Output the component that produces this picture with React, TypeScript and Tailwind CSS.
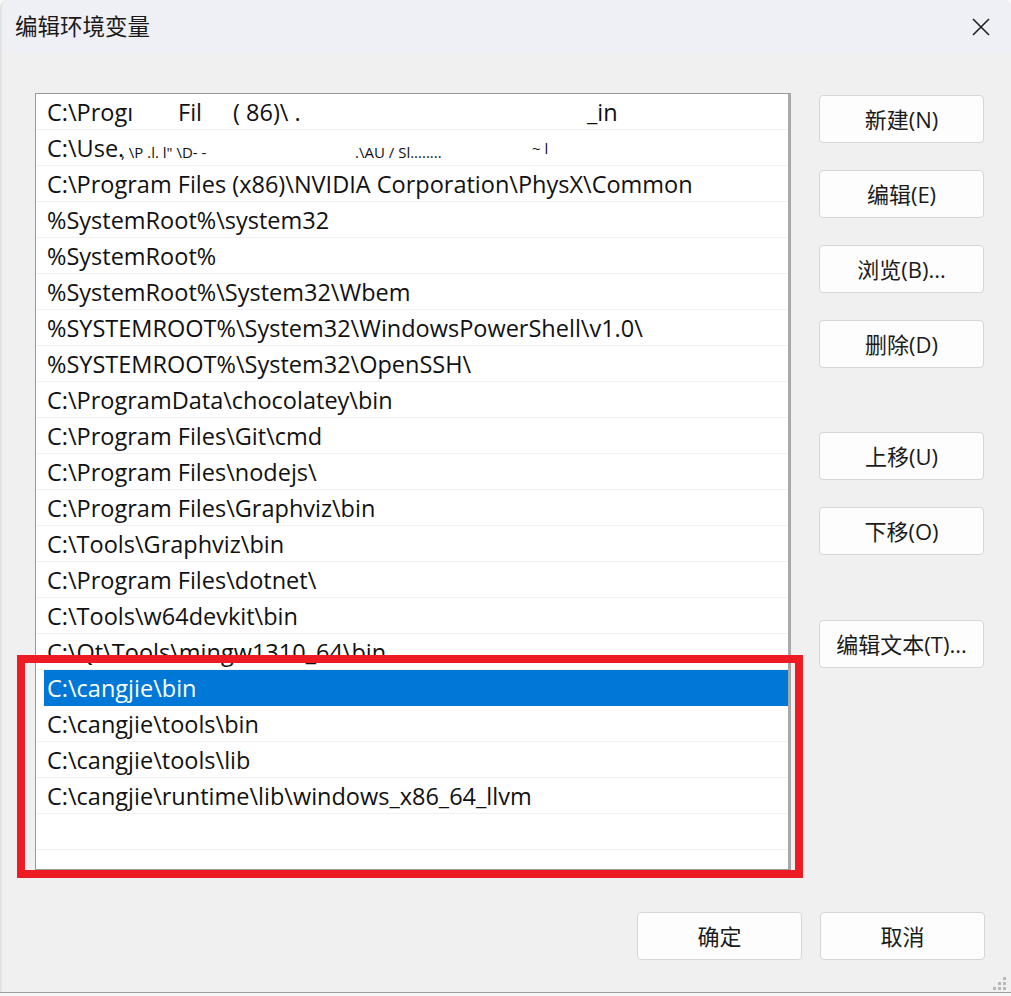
import React from 'react';

const paths: string[] = [
  'C:\\Program Files (x86)\\NVIDIA Corporation\\PhysX\\Common',
  '%SystemRoot%\\system32',
  '%SystemRoot%',
  '%SystemRoot%\\System32\\Wbem',
  '%SYSTEMROOT%\\System32\\WindowsPowerShell\\v1.0\\',
  '%SYSTEMROOT%\\System32\\OpenSSH\\',
  'C:\\ProgramData\\chocolatey\\bin',
  'C:\\Program Files\\Git\\cmd',
  'C:\\Program Files\\nodejs\\',
  'C:\\Program Files\\Graphviz\\bin',
  'C:\\Tools\\Graphviz\\bin',
  'C:\\Program Files\\dotnet\\',
  'C:\\Tools\\w64devkit\\bin',
  'C:\\Qt\\Tools\\mingw1310_64\\bin',
];

const cangjie: string[] = [
  'C:\\cangjie\\bin',
  'C:\\cangjie\\tools\\bin',
  'C:\\cangjie\\tools\\lib',
  'C:\\cangjie\\runtime\\lib\\windows_x86_64_llvm',
];

const Btn = ({ label, className = '' }: { label: string; className?: string }) => (
  <button
    className={`w-[165px] h-[48px] bg-[#fdfdfd] border border-[#d6d6d6] rounded-[4px] text-[22px] text-[#1b1b1b] flex items-center justify-center ${className}`}
  >
    {label}
  </button>
);

const Row = ({ children, selected = false }: { children: React.ReactNode; selected?: boolean }) =>
  selected ? (
    <div className="h-[36px] flex items-center pl-[8px]">
      <div className="h-full flex-1 bg-[#0078d7] text-white flex items-center pl-[3px] pt-[2px]">{children}</div>
    </div>
  ) : (
    <div className="h-[36px] flex items-center pl-[11px] pt-[2px] border-b border-[#f0f0f0] whitespace-nowrap">
      {children}
    </div>
  );

export default function App() {
  return (
    <div
      className="w-[1011px] h-[996px] bg-[#f7f7f7] relative overflow-hidden"
      style={{ fontFamily: '"Open Sans", "Noto Sans CJK SC", sans-serif' }}
    >
      <div className="h-[992px] bg-[#f0f0f0] rounded-t-[8px] border-l-[2px] border-[#e2e2e2] flex flex-col">
        {/* title bar */}
        <div className="h-[53px] bg-[#eef0f6] rounded-t-[8px] flex items-center justify-between pl-[13px] pr-[20px]">
          <span className="text-[22.5px] text-[#1a1a1a]">编辑环境变量</span>
          <svg width="20" height="20" viewBox="0 0 20 20" className="mt-[1px]">
            <path d="M2 2 L18 18 M18 2 L2 18" stroke="#1f1f1f" strokeWidth="1.6" />
          </svg>
        </div>

        {/* body */}
        <div className="flex pl-[33px] pt-[40px]">
          <div className="w-[756px] h-[777px] bg-white border border-[#9a9a9a] border-r-[3px] border-r-[#a8a8a8] text-[23.5px] text-[#111] overflow-hidden">
            {/* first two entries are partly blotted out in the capture */}
            <Row>
              <span className="w-[131px] shrink-0">C:\Progı</span>
              <span className="w-[55px] shrink-0">Fil</span>
              <span className="w-[354px] shrink-0">( 86)\ .</span>
              <span>_in</span>
            </Row>
            <Row>
              <span className="w-[74px] shrink-0">C:\Use.</span>
              <span className="w-[234px] shrink-0 text-[15px] pt-[8px]">, \P .l. l" \D- -</span>
              <span className="w-[177px] shrink-0 text-[15px] pt-[8px]">.\AU / Sl........</span>
              <span className="text-[15px]">~ l</span>
            </Row>
            {paths.map((p) => (
              <Row key={p}>{p}</Row>
            ))}
            {cangjie.map((p, i) => (
              <Row key={p} selected={i === 0}>
                {p}
              </Row>
            ))}
            <Row>{''}</Row>
          </div>

          <div className="flex flex-col ml-[28px] pt-[2px]">
            <Btn label="新建(N)" />
            <Btn label="编辑(E)" className="mt-[27px]" />
            <Btn label="浏览(B)..." className="mt-[27px]" />
            <Btn label="删除(D)" className="mt-[27px]" />
            <Btn label="上移(U)" className="mt-[64px]" />
            <Btn label="下移(O)" className="mt-[27px]" />
            <Btn label="编辑文本(T)..." className="mt-[65px]" />
          </div>
        </div>

        {/* footer */}
        <div className="flex justify-end gap-[18px] pr-[26px] mt-[42px]">
          <Btn label="确定" />
          <Btn label="取消" />
        </div>
      </div>
      <div className="h-[1px] bg-[#9c9c9c]" />

      {/* resize grip */}
      <svg width="16" height="16" viewBox="0 0 16 16" className="absolute right-[4px] bottom-[5px]">
        <rect x="12" y="2" width="3" height="3" fill="#b8b8b8" />
        <rect x="7" y="7" width="3" height="3" fill="#b8b8b8" />
        <rect x="12" y="7" width="3" height="3" fill="#b8b8b8" />
        <rect x="2" y="12" width="3" height="3" fill="#b8b8b8" />
        <rect x="7" y="12" width="3" height="3" fill="#b8b8b8" />
        <rect x="12" y="12" width="3" height="3" fill="#b8b8b8" />
      </svg>

      {/* red highlight box */}
      <div className="absolute left-[17px] top-[655px] w-[786px] h-[223px] border-[8px] border-[#ed1c24] pointer-events-none" />
    </div>
  );
}
